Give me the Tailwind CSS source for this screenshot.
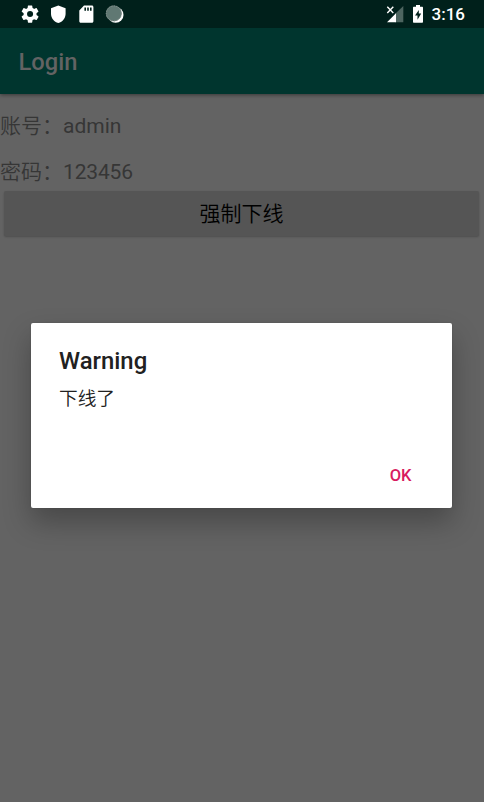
<!DOCTYPE html>
<html lang="zh-CN">
<head>
<meta charset="utf-8">
<title>Login</title>
<script src="https://cdn.jsdelivr.net/npm/@tailwindcss/browser@4"></script>
</head>
<body class="bg-[#636363] font-[Roboto,'Noto_Sans_CJK_SC',sans-serif]">
<div class="relative flex h-[802px] w-[484px] flex-col overflow-hidden bg-[#636363]">
  <header class="z-0 shrink-0 bg-[#00352e] shadow-[0_1px_4px_rgba(0,0,0,0.45)]">
    <div class="flex h-7 items-center justify-between bg-[#00201b] pl-[21px] pr-[19px] text-white">
      <div class="flex items-center gap-[9px]">
        <svg class="size-[19px]" viewBox="1.500 1.500 22 22" fill="currentColor"><path d="M19.43 12.98c.04-.32.07-.64.07-.98s-.03-.66-.07-.98l2.11-1.65c.19-.15.24-.42.12-.64l-2-3.46c-.12-.22-.39-.3-.61-.22l-2.49 1c-.52-.4-1.08-.73-1.69-.98l-.38-2.65A.49.49 0 0 0 14 2h-4c-.25 0-.46.18-.49.42l-.38 2.65c-.61.25-1.17.59-1.69.98l-2.49-1c-.23-.09-.49 0-.61.22l-2 3.46c-.13.22-.07.49.12.64l2.11 1.65c-.04.32-.07.65-.07.98s.03.66.07.98l-2.11 1.65c-.19.15-.24.42-.12.64l2 3.46c.12.22.39.3.61.22l2.49-1c.52.4 1.08.73 1.69.98l.38 2.65c.03.24.24.42.49.42h4c.25 0 .46-.18.49-.42l.38-2.65c.61-.25 1.17-.59 1.69-.98l2.49 1c.23.09.49 0 .61-.22l2-3.46c.12-.22.07-.49-.12-.64l-2.11-1.65zM12 15.5a3.5 3.5 0 1 1 0-7 3.500 3.500 0 0 1 0 7z"/></svg>
        <svg class="size-[19px]" viewBox="0 0 19 19" fill="currentColor"><path d="M9.300.4 16.600 3.300V8.700c0 4.300-2.900 8-7.300 9.300C4.900 16.700 2 13 2 8.700V3.300z"/></svg>
        <svg class="size-[19px]" viewBox="0 0 19 19" fill="currentColor"><path fill-rule="evenodd" d="M7 .5h7.900c.9 0 1.500.6 1.500 1.500v14.300c0 .9-.6 1.500-1.500 1.500H3.800c-.9 0-1.500-.6-1.500-1.500V5.600zM7.400 2.500v3.300h1.600V2.500zM10.200 2.500v3.300h1.600V2.500zM13 2.500v3.300h1.600V2.500z"/></svg>
        <svg class="size-[19px]" viewBox="0 0 19 19"><circle cx="10.600" cy="9.900" r="7.900" fill="#fff"/><circle cx="8.800" cy="8.400" r="7.900" fill="#607873"/><circle cx="8.800" cy="8.400" r="7.500" fill="none" stroke="#84918e" stroke-width="1" stroke-dasharray="1.500 1"/></svg>
      </div>
      <div class="flex items-center">
        <svg class="h-[18px] w-[18px]" viewBox="0 0 18 18"><path d="M17.300 1v16.300H9V9z" fill="#4d6560"/><path d="M1 17.300 10 8.300v9z" fill="#fff"/><path d="M0 0h8v8H0z" fill="#00201b"/><path d="m1.300 1.800 6 6.200m0-6.200L1.300 8" stroke="#fff" stroke-width="1.400" fill="none"/></svg>
        <svg class="ml-[8px] h-[18px] w-[12px]" viewBox="0 0 12 18"><path fill="#fff" fill-rule="evenodd" d="M4 0h4v1.700h2c.6 0 1 .4 1 1v14c0 .6-.4 1-1 1H2c-.6 0-1-.4-1-1v-14c0-.6.400-1 1-1h2zM6.800 5 3 10.500h2.500v4.200L9.200 8.600H6.800z"/></svg>
        <span class="ml-[8px] text-[17px] font-medium leading-7 text-white">3:16</span>
      </div>
    </div>
    <h1 class="flex h-[65.500px] items-center pl-[18.500px] pt-[4px] text-[23.700px] font-medium text-[#636363]">Login</h1>
  </header>
  <main class="text-[21px] text-[#363636]">
    <p class="mt-[17px] h-[31px] leading-[31px]"><span class="font-[350]">账号：</span>admin</p>
    <p class="mt-[15px] h-[31px] leading-[31px]"><span class="font-[350]">密码：</span><span class="tracking-[-0.15px]">123456</span></p>
    <button class="mx-[4px] mt-[3.500px] block h-[45px] w-[475px] rounded-[2px] bg-[#555] pt-px font-[350] leading-[45px] text-black shadow-[0_1px_2px_rgba(0,0,0,0.22)]">强制下线</button>
  </main>
  <section role="dialog" class="absolute left-[31px] top-[323px] flex h-[185px] w-[421px] flex-col rounded-[2px] bg-white px-[28px] shadow-[0_14px_28px_rgba(0,0,0,0.28),0_0_2px_rgba(0,0,0,0.15)]">
    <h2 class="mt-[23px] h-[31px] text-[23.900px] font-medium leading-[31px] text-[#212121]">Warning</h2>
    <p class="mt-[8px] h-[28px] text-[18.700px] font-[350] leading-[28px] text-[#212121]">下线了</p>
    <button class="mt-[51px] self-end pr-[12.500px] text-[16.500px] font-medium leading-[24px] text-[#d81b60]">OK</button>
  </section>
</div>
</body>
</html>
